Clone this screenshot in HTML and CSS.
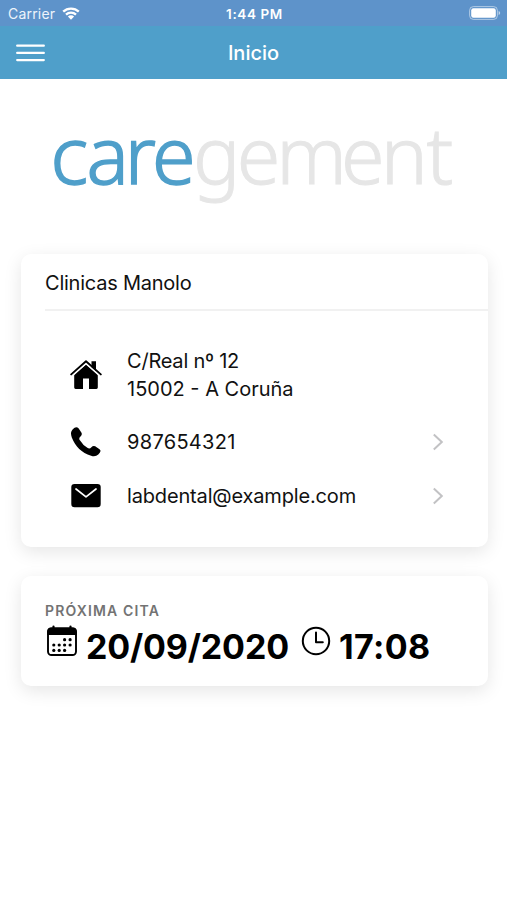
FILE: index.html
```html
<!DOCTYPE html>
<html lang="es">
<head>
<meta charset="utf-8">
<meta name="viewport" content="width=device-width, initial-scale=1">
<title>Inicio</title>
<link rel="stylesheet" href="styles.css">
</head>
<body>
<div class="status">
  <div class="carrier"><span>Carrier</span>
    <svg class="wifi" viewBox="0 0 18 13"><path d="M1.2 4.7a11.2 11.2 0 0 1 15.6 0M4 7.6a7.2 7.2 0 0 1 10 0" fill="none" stroke="#fff" stroke-width="2.3"/><path d="M9 12.7 5.9 9.6a4.4 4.4 0 0 1 6.2 0z" fill="#fff"/></svg>
  </div>
  <div class="clock">1:44 PM</div>
  <svg class="battery" viewBox="0 0 32 14"><rect x=".6" y=".6" width="27.8" height="12.8" rx="3.8" fill="none" stroke="#fff" stroke-opacity=".5"/><rect x="2.2" y="2.2" width="24.6" height="9.6" rx="2.2" fill="#fff"/><path d="M29.6 5v4q1.6-.5 1.6-2t-1.6-2" fill="#fff" fill-opacity=".6"/></svg>
</div>
<header class="toolbar">
  <button class="menu" aria-label="Menú"><svg viewBox="0 0 29 18"><path d="M1.2 1.7h26.6M1.2 8.9h26.6M1.2 16.1h26.6"/></svg></button>
  <h1 class="title">Inicio</h1>
</header>
<main>
  <svg class="logo" viewBox="0 0 507 120"><text class="care" x="50.5 86.5 124.8 152" y="84.5">care</text><text class="gement" x="193 236.7 276.3 341 380.8 426.5" y="84.5">gement</text></svg>
  <section class="card clinic">
    <h2 class="name">Clinicas Manolo</h2>
    <div class="row address">
      <svg class="icon" viewBox="0 0 32 32"><path d="M16 5.5 4.2 15.6V28.6Q4.2 30 5.6 30H13V19.6h6V30h7.4q1.4 0 1.4-1.4V15.6z"/><path d="M21.5 2.3H26v10l-4.5-4z"/><path d="M2 17.2 16 4.9l14 12.3" fill="none" stroke="#fff" stroke-width="1.2"/><path d="M1.2 15.4 16 2.3l14.8 13.1" fill="none" stroke="#000" stroke-width="1.9" stroke-linecap="round" stroke-linejoin="round"/></svg>
      <p class="text"><span class="street">C/Real nº 12</span><br>15002 - A Coruña</p>
    </div>
    <div class="row">
      <svg class="icon" viewBox="0 0 32 32"><path d="M2.8 3.2Q6-.1 8.7 2.4L11.5 6.7q1 2.2-1 3.8-2 1.7-.8 3.6 3 5 8 8 2 1.2 3.7-.8 1.6-2 3.8-1l4.3 2.9q2.5 2-1.2 5.3-2.9 2.8-7.2 1.3C11.6 26.5 5.4 20.6 1.8 11.4 .3 7.2 1.1 5 2.8 3.2z"/></svg>
      <p class="text phone">987654321</p>
      <svg class="chevron" viewBox="0 0 12 18"><path d="m1.8 1.5 8 7.5-8 7.5"/></svg>
    </div>
    <div class="row">
      <svg class="icon" viewBox="0 0 32 32"><rect x="1.3" y="3.9" width="29.4" height="23.4" rx="3.2"/><path d="m6 9 10 7.8 10-7.8" fill="none" stroke="#fff" stroke-width="1.7" stroke-linecap="round" stroke-linejoin="round"/></svg>
      <p class="text mail">labdental@example.com</p>
      <svg class="chevron" viewBox="0 0 12 18"><path d="m1.8 1.5 8 7.5-8 7.5"/></svg>
    </div>
  </section>
  <section class="card visit">
    <h3 class="label">PRÓXIMA CITA</h3>
    <div class="when">
      <svg class="calendar" viewBox="0 0 32 32"><rect x="2" y="3.4" width="28" height="26.6" rx="3.5" fill="none" stroke="#000" stroke-width="1.9"/><path d="M1.2 10V6.5q0-4 4-4h21.6q4 0 4 4V10z"/><path d="M7.5 1.6v2M24.5 1.6v2" stroke="#000" stroke-width="2.2" stroke-linecap="round"/><g><circle cx="18.6" cy="14.7" r="1.6"/><circle cx="24.1" cy="14.7" r="1.6"/><circle cx="7.8" cy="20" r="1.6"/><circle cx="13.2" cy="20" r="1.6"/><circle cx="18.6" cy="20" r="1.6"/><circle cx="24.1" cy="20" r="1.6"/><circle cx="7.8" cy="25.4" r="1.6"/><circle cx="13.2" cy="25.4" r="1.6"/><circle cx="18.6" cy="25.4" r="1.6"/></g></svg>
      <span class="date">20/09/2020</span>
      <svg class="time-icon" viewBox="0 0 30 30"><circle cx="15" cy="15" r="13.2"/><path d="M15 6.5v9.7h6.8" stroke-linecap="round" stroke-linejoin="round"/></svg>
      <span class="time">17:08</span>
    </div>
  </section>
</main>
</body>
</html>
```
FILE: styles.css
```css
* { box-sizing: border-box; }
body { margin: 0; min-height: 900px; background: #fff; color: #111; font-family: Inter, "Liberation Sans", sans-serif; overflow: hidden; }
h1, h2, h3, p { margin: 0; font-weight: 400; }
svg { display: block; flex: none; }
.status { display: grid; grid-template-columns: 1fr auto 1fr; align-items: center; height: 26px; padding: 2px 6px 0 8px; background: #5e93ca; color: #fff; }
.carrier { display: flex; align-items: center; gap: 7px; font-size: 14px; line-height: 20px; letter-spacing: .2px; color: #edf4fb; }
.wifi { width: 18px; height: 13px; margin-top: -2px; }
.clock { font-size: 13.5px; font-weight: 600; line-height: 20px; letter-spacing: .6px; }
.battery { width: 32px; height: 14px; justify-self: end; margin-top: -2px; }
.toolbar { display: grid; grid-template-columns: 60px 1fr 60px; align-items: center; height: 53px; background: #4f9fca; color: #fff; }
.menu { margin-left: 16px; padding: 0; border: 0; background: none; }
.menu svg { width: 29px; height: 18px; fill: none; stroke: #fff; stroke-width: 2.3; stroke-linecap: round; }
.title { font-size: 20px; font-weight: 550; text-align: center; letter-spacing: 0; }
.logo { width: 507px; height: 120px; margin-top: 20px; }
.care, .gement { font-family: "Noto Sans", "Open Sans", sans-serif; font-size: 79px; font-weight: 300; }
.care { fill: #4f9fca; stroke: #4f9fca; stroke-width: 1.5px; }
.gement { fill: #e6e6e6; stroke: #e6e6e6; stroke-width: 1px; }
.card { margin: 0 19px 0 21px; border-radius: 10px; background: #fff; box-shadow: 0 5px 18px rgba(0, 0, 0, .1); }
.clinic { height: 293px; margin-top: 35px; }
.name { height: 57px; margin-left: 24px; border-bottom: 2px solid #f1f1f1; font-size: 20px; line-height: 59px; letter-spacing: -.23px; }
.row { display: flex; align-items: center; height: 54px; padding: 0 44px 0 49px; }
.address { height: 56px; margin: 36px 0 0; }
.address + .row { margin-top: 12px; }
.icon { width: 32px; height: 32px; margin-right: 25px; fill: #000; }
.text { flex: 1; font-size: 20px; line-height: 28px; }
.street { letter-spacing: -.22px; }
.phone { letter-spacing: .3px; }
.mail { letter-spacing: -.16px; }
.chevron { width: 12px; height: 18px; fill: none; stroke: #c2c2c4; stroke-width: 2; }
.visit { height: 110px; margin-top: 29px; padding: 26px 24px 0; }
.label { font-size: 14px; font-weight: 600; line-height: 18px; letter-spacing: 1.15px; color: #737373; }
.when { display: flex; color: #000; font-size: 34px; font-weight: 700; line-height: 46px; }
.calendar { width: 32px; height: 32px; margin: 5px 8px 0 1px; }
.date { margin-top: 4px; letter-spacing: -.15px; }
.time-icon { width: 30px; height: 30px; margin: 6px 8px 0 12px; fill: none; stroke: #000; stroke-width: 2; }
.time { margin-top: 4px; letter-spacing: .35px; }
```
